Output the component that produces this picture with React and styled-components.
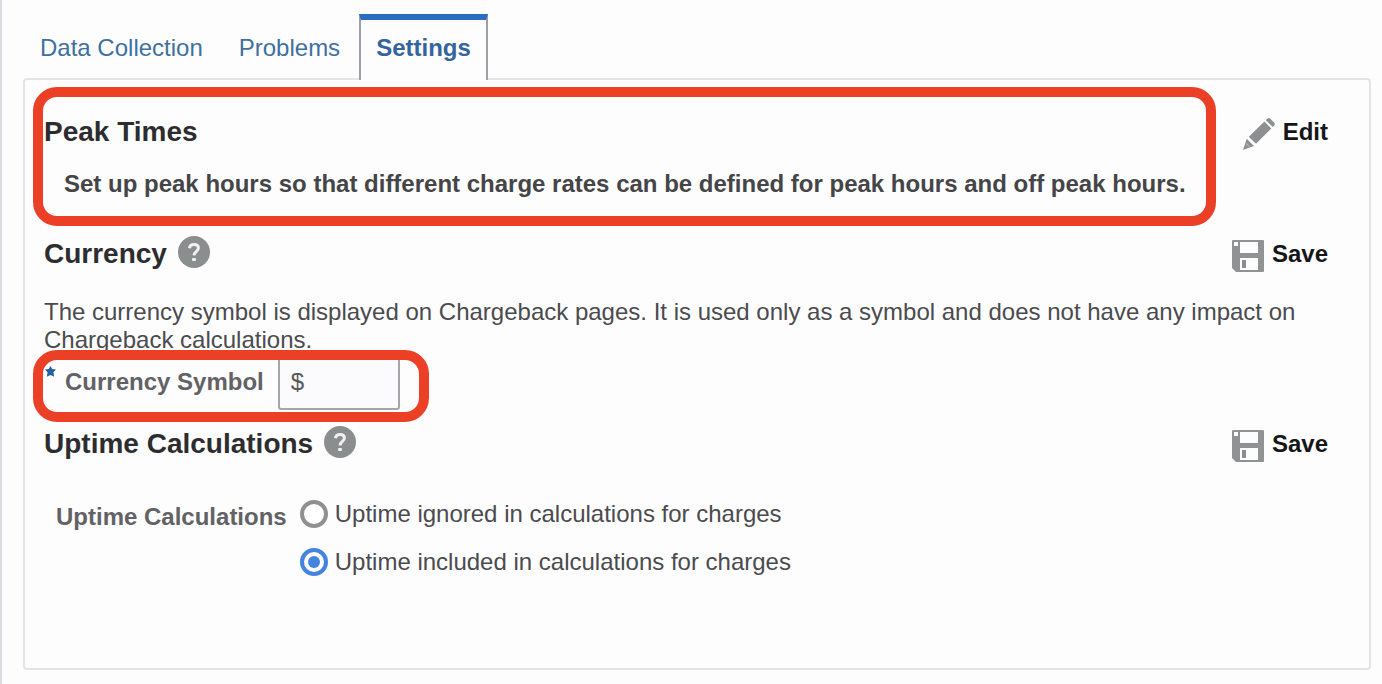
import React, { useState } from "react";
import styled, { createGlobalStyle } from "styled-components";

const GlobalStyle = createGlobalStyle`
  *, *::before, *::after { box-sizing: border-box; }
  body {
    margin: 0;
    background: #fdfdfe;
    color: #4b4b4e;
    font: 24px/28px "Liberation Sans", Arial, sans-serif;
  }
  button, input { font: inherit; color: inherit; }
`;

const Page = styled.main`
  display: flex;
  flex-direction: column;
  min-height: 100vh;
  padding: 14px 11px 14px 21px;
  border-left: 2px solid #dcdce1;
`;

const TabList = styled.div`
  display: flex;
  gap: 2px;
  position: relative;
  margin-bottom: -2px;
`;

const Tab = styled.button`
  height: 66px;
  padding: 0 15px 4px;
  border: 2px solid transparent;
  border-top-width: 6px;
  border-bottom: 0;
  background: ${(p) => (p.$active ? "#fdfdfe" : "transparent")};
  border-color: ${(p) => (p.$active ? "#2b6ebf #9fa0a5" : "transparent")};
  color: ${(p) => (p.$active ? "#34649c" : "#3f709e")};
  font-weight: ${(p) => (p.$active ? 700 : 400)};
  white-space: nowrap;
  cursor: pointer;
`;

const Panel = styled.section`
  flex: 1;
  padding: 36px 41px 36px 19px;
  border: 2px solid #e4e4e8;
  border-radius: 4px;
`;

const SectionHeader = styled.div`
  display: flex;
  align-items: flex-start;
  justify-content: space-between;
  height: 32px;
`;

const HeadingGroup = styled.div`
  display: flex;
  align-items: center;
  gap: 11px;
  height: 32px;
`;

const Heading = styled.h2`
  margin: 0;
  color: #2d2d30;
  font-size: 28px;
  line-height: 32px;
`;

const HelpButton = styled.button`
  display: block;
  height: 32px;
  padding: 0;
  margin-bottom: 4px;
  border: 0;
  background: none;
  cursor: pointer;
`;

const ActionButton = styled.button`
  display: flex;
  align-items: flex-start;
  gap: 8px;
  padding: 2px 0 0;
  border: 0;
  background: none;
  color: #161618;
  font-weight: 700;
  cursor: pointer;
  svg { display: block; overflow: visible; }
`;

const Highlight = styled.div`
  position: absolute;
  inset: ${(p) => p.$inset};
  border: 10px solid #ec4026;
  border-radius: 24px;
  pointer-events: none;
`;

const PeakSection = styled.div`
  position: relative;
  margin-bottom: 40px;
`;

const PeakNote = styled.p`
  margin: 22px 0 0;
  padding-left: 20px;
  color: #454548;
  font-weight: 700;
`;

const Description = styled.p`
  margin: 28px 0 0;
`;

const CurrencyField = styled.div`
  position: relative;
  display: flex;
  align-items: center;
  width: fit-content;
  margin-bottom: 18px;
`;

const RequiredMark = styled.svg`
  align-self: flex-start;
  margin: 12px 9px 0 1px;
`;

const FieldLabel = styled.label`
  color: #626265;
  font-weight: 700;
`;

const CurrencyInput = styled.input`
  width: 122px;
  height: 56px;
  margin-left: 14px;
  padding: 0 11px;
  border: 2px solid #a5a6aa;
  border-radius: 3px;
  background: #fbfbfd;
  color: #58585b;
`;

const UptimeField = styled.div`
  display: flex;
  gap: 13px;
  margin-top: 30px;
  padding-left: 12px;
`;

const GroupLabel = styled.div`
  padding-top: 13px;
  color: #626265;
  font-weight: 700;
`;

const Option = styled.label`
  display: flex;
  align-items: center;
  gap: 7px;
  height: 48px;
  cursor: pointer;
`;

const Radio = styled.input`
  appearance: none;
  display: grid;
  place-items: center;
  width: 28px;
  height: 28px;
  margin: 0;
  border: 4px solid #909093;
  border-radius: 50%;
  background: #fff;
  &:checked { border-color: #4484de; }
  &:checked::before {
    content: "";
    width: 12px;
    height: 12px;
    border-radius: 50%;
    background: #4484de;
  }
`;

function Help({ topic }) {
  return (
    <HelpButton type="button" aria-label={`Help: ${topic}`}>
      <svg width="32" height="32" viewBox="0 0 32 32" aria-hidden="true">
        <circle cx="16" cy="16" r="16" fill="#8b8e8f" />
        <path
          d="M11.4 12.2c.3-2.5 2-3.8 4.5-3.8 2.7 0 4.5 1.3 4.5 3.6 0 3.3-4 3.4-4.4 7.4"
          fill="none"
          stroke="#eef0f1"
          strokeWidth="3"
        />
        <rect x="14" y="22" width="4" height="3" rx="1" fill="#eef0f1" />
      </svg>
    </HelpButton>
  );
}

function PencilIcon() {
  return (
    <svg width="32" height="32" viewBox="0 0 32 32" fill="#8c9091" aria-hidden="true">
      <path d="M22.8 2.2 24.5.5q1.3-1.1 2.6 0l4.2 4.3q1.1 1.3 0 2.6L29.7 9z" />
      <path d="M21.4 3.6 28.3 10.4 13 25.8 5.8 18.8z" />
      <path d="M3.7 20.8 11 27.9 0 32z" />
      <path d="M3.2 25.5 6.6 28.8" stroke="#c4c7c8" strokeWidth="1" />
    </svg>
  );
}

function FloppyIcon() {
  return (
    <svg width="32" height="32" viewBox="0 0 32 32" aria-hidden="true">
      <path d="M1 0h30q1 0 1 1v30q0 1-1 1H4L0 28V1q0-1 1-1z" fill="#909294" />
      <path d="M8 2h18v11H8zM8 18h18v12H8z" fill="#fdfdfe" />
      <path d="M2 2h4v4H2z" fill="#fdfdfe" />
      <path d="M10 20h4v8h-4z" fill="#8b8d8f" />
    </svg>
  );
}

const tabs = ["Data Collection", "Problems", "Settings"];
const uptimeOptions = [
  ["ignored", "Uptime ignored in calculations for charges"],
  ["included", "Uptime included in calculations for charges"],
];

export default function App() {
  const [activeTab, setActiveTab] = useState("Settings");
  const [symbol, setSymbol] = useState("$");
  const [uptime, setUptime] = useState("included");

  return (
    <>
      <GlobalStyle />
      <Page>
        <TabList role="tablist">
          {tabs.map((name) => (
            <Tab
              key={name}
              type="button"
              role="tab"
              aria-selected={name === activeTab}
              $active={name === activeTab}
              onClick={() => setActiveTab(name)}
            >
              {name}
            </Tab>
          ))}
        </TabList>
        <Panel role="tabpanel" aria-label={activeTab}>
          <PeakSection>
            <SectionHeader>
              <Heading>Peak Times</Heading>
              <ActionButton type="button">
                <PencilIcon />
                Edit
              </ActionButton>
            </SectionHeader>
            <PeakNote>
              Set up peak hours so that different charge rates can be defined for peak hours and off peak hours.
            </PeakNote>
            <Highlight $inset="-29px 112px -28px -11px" />
          </PeakSection>

          <SectionHeader>
            <HeadingGroup>
              <Heading>Currency</Heading>
              <Help topic="Currency" />
            </HeadingGroup>
            <ActionButton type="button">
              <FloppyIcon />
              Save
            </ActionButton>
          </SectionHeader>
          <Description>
            The currency symbol is displayed on Chargeback pages. It is used only as a symbol and does not have any
            impact on Chargeback calculations.
          </Description>
          <CurrencyField>
            <RequiredMark width="11" height="11" viewBox="0 0 11 11" aria-hidden="true">
              <path
                d="M5.5 0 7.2 3 11 3.4 8.4 6.2 9.2 10.8 5.5 9 1.8 10.8 2.6 6.2 0 3.4 3.8 3z"
                fill="#22609f"
              />
            </RequiredMark>
            <FieldLabel htmlFor="currency-symbol">Currency Symbol</FieldLabel>
            <CurrencyInput
              id="currency-symbol"
              type="text"
              required
              value={symbol}
              onChange={(e) => setSymbol(e.target.value)}
            />
            <Highlight $inset="-4px -29px -12px -11px" />
          </CurrencyField>

          <SectionHeader>
            <HeadingGroup>
              <Heading>Uptime Calculations</Heading>
              <Help topic="Uptime Calculations" />
            </HeadingGroup>
            <ActionButton type="button">
              <FloppyIcon />
              Save
            </ActionButton>
          </SectionHeader>
          <UptimeField role="radiogroup" aria-labelledby="uptime-label">
            <GroupLabel id="uptime-label">Uptime Calculations</GroupLabel>
            <div>
              {uptimeOptions.map(([value, text]) => (
                <Option key={value}>
                  <Radio
                    type="radio"
                    name="uptime"
                    value={value}
                    checked={uptime === value}
                    onChange={() => setUptime(value)}
                  />
                  {text}
                </Option>
              ))}
            </div>
          </UptimeField>
        </Panel>
      </Page>
    </>
  );
}
